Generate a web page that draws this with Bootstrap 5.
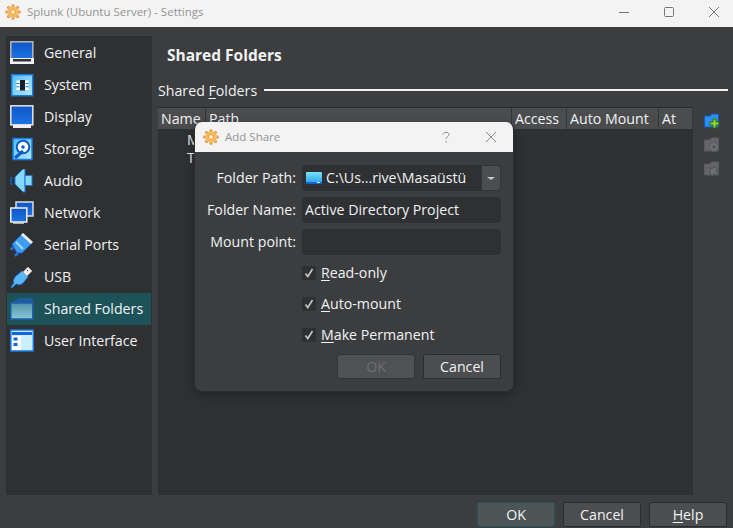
<!DOCTYPE html>
<html lang="en">
<head>
<meta charset="utf-8">
<title>Settings</title>
<link href="https://cdn.jsdelivr.net/npm/bootstrap@5.3.0/dist/css/bootstrap.min.css" rel="stylesheet">
<style>
html,body{height:528px;overflow:hidden}
body{background:#3c3d3f;color:#f0f2f4;font-family:"Open Sans","Noto Sans","Liberation Sans",sans-serif;font-size:14.2px;line-height:20px;position:relative}
.winbar{height:27px;background:#f3f3f3;color:#949494;font-size:11.5px;padding:0 0 3px 5px}
.winbar .ttl{margin-left:6px}
.wctls{margin-right:-3px}
.wctl{width:45px;justify-content:center}
.shell{height:501px;padding:9px 6px 0 6px}
.side{width:146px;height:459px;background:#2f3032;padding-top:1px;flex:none}
.sitem{height:32px;padding-left:3px;margin:0 1px;gap:10px;white-space:nowrap}
.sitem.on{background:#1d5259}
.sitem svg{flex:none}
.mainp{margin-left:6px;width:535px;flex:none}
.ptitle{font-weight:700;font-size:15.5px;height:40px;padding:1px 0 4px 9px;line-height:22px}
.grouph{height:31px;gap:7px;padding-bottom:1px}
.grouph .rule{flex:1;height:2px;background:#f2f2f2;margin:0 -35px 2px 0}
.tablebox{height:388px;background:#2f3032;position:relative}
.thead-row{height:22px;background:#4b4c4e;border-top:1px solid #2b2c2d}
.thc{border-right:1px solid #353638;padding-left:3px;height:21px;line-height:21px;white-space:nowrap;overflow:hidden}
.tcells{position:absolute;left:29px;top:24px;line-height:18px}
.sidetools{width:28px;padding-top:77px;padding-left:11px;gap:8px;flex:none}
.footb{height:35px;padding-top:7px;gap:8px;margin-right:-34px}
.vbtn{width:78px;height:25px;background:#4c4d4f;border:1px solid #2c2d2e;border-radius:2px;color:#f0f2f4;font-size:14.2px;line-height:22px;padding:0;text-align:center}
.vbtn.def{background:#4d5456;border-color:#25525a}
.vbtn.off{background:#505153;color:#6d6e70;border-color:#333436}
.dlg{position:absolute;left:194px;top:122px;width:320px;height:270px;background:#3c3d3f;border:1px solid #2c2d2e;border-top:0;border-radius:8px;overflow:hidden;box-shadow:0 2px 10px rgba(0,0,0,.3)}
.dlgbar{height:30px;background:#f3f3f3;color:#949494;font-size:11.5px;padding-left:9px;margin:0 -1px}
.dlgtxt{margin-left:6px}
.dlgq{margin-left:auto;margin-right:33px}
.dlgx{margin-right:17px}
.dlgbody{padding:10px 12px 0 0}
.frow{height:32px}
.frow.lastf{height:31px}
.flab{width:101px;text-align:right;flex:none;white-space:nowrap}
.fval{margin-left:6px;width:200px;height:26px;background:#2f3032;border-radius:3px;padding-left:3px;line-height:26px;white-space:nowrap;position:relative}
.cbx{margin-left:107px;height:31px;gap:5px}
.cbx .bx{width:14px;height:14px;background:#2f3032;display:flex;align-items:center;justify-content:center}
.dbtns{gap:8px;padding-top:4px}
.arrowb{position:absolute;right:0;top:0;width:20px;height:26px;background:#4c4d4f;border:1px solid #333436;border-radius:0 3px 3px 0;display:flex;align-items:center;justify-content:center}
.arrowb i{display:block;width:0;height:0;border-left:4px solid transparent;border-right:4px solid transparent;border-top:3px solid #c8c9ca}
.hdicon{margin-right:4px;margin-left:1px;flex:none}
u{text-underline-offset:2px}
</style>
</head>
<body>
<svg width="0" height="0" class="d-block position-absolute"><defs>
<linearGradient id="scr" x1="0" y1="0" x2="0" y2="1"><stop offset="0" stop-color="#0f56c8"/><stop offset="1" stop-color="#1c74e4"/></linearGradient>
<linearGradient id="lb" x1="0" y1="0" x2="1" y2="1"><stop offset="0" stop-color="#4fbdf8"/><stop offset="1" stop-color="#b5e9fd"/></linearGradient>
<linearGradient id="fld" x1="0" y1="0" x2="0" y2="1"><stop offset="0" stop-color="#4f94ac"/><stop offset="1" stop-color="#8cc7d2"/></linearGradient>
<linearGradient id="cmb" x1="0" y1="0" x2="0" y2="1"><stop offset="0" stop-color="#7be0fa"/><stop offset="1" stop-color="#22a0e8"/></linearGradient>
<g id="gear"><g stroke="#e8862a" stroke-width="3" stroke-linecap="round"><path d="M8 1.700v12.600M1.700 8h12.600M3.500 3.500l9 9M3.500 12.500l9-9"/></g><g stroke="#f8c469" stroke-width="1.500" stroke-linecap="round"><path d="M8 2v12M2 8h12M3.700 3.700l8.600 8.600M3.700 12.300l8.600-8.600"/></g><circle cx="8" cy="8" r="4.800" fill="#f9bd5c"/><circle cx="8" cy="8" r="2.500" fill="#fff0c4" stroke="#e8892a" stroke-width=".8"/></g>
</defs></svg>
<div class="winbar d-flex align-items-center">
<svg width="16" height="16"><use href="#gear"/></svg><span class="ttl">Splunk (Ubuntu Server) - Settings</span>
<div class="ms-auto d-flex align-items-center wctls">
<span class="wctl d-flex"><svg width="12" height="12"><path d="M1 6.500h10" stroke="#777"/></svg></span>
<span class="wctl d-flex"><svg width="12" height="12"><rect x="1.500" y="1.500" width="9" height="9" rx="1" fill="none" stroke="#777"/></svg></span>
<span class="wctl d-flex"><svg width="12" height="12"><path d="M1 1l10 10M11 1L1 11" stroke="#777"/></svg></span>
</div>
</div>
<div class="shell d-flex">
<div class="side">
<div class="sitem d-flex align-items-center"><svg width="24" height="24"><rect x=".8" y=".8" width="22" height="17" fill="url(#scr)" stroke="#b0b0b0" stroke-width="1.600"/><path d="M0 17h24v6H0z" fill="#f0f0f0"/><path d="M3 18h18v2.500H3z" fill="#333"/></svg>General</div>
<div class="sitem d-flex align-items-center"><svg width="24" height="24"><rect x="1.700" y="1.700" width="21" height="21" fill="url(#lb)" stroke="#1a78e0" stroke-width="1.500"/><rect x="6.500" y="7.500" width="12" height="9.500" fill="#fff"/><rect x="10" y="7" width="5" height="10.500" fill="#16202c"/><path d="M6.500 10.500h3M6.500 13.800h3M15.500 10.500h3M15.500 13.800h3" stroke="#1a78e0"/></svg>System</div>
<div class="sitem d-flex align-items-center"><svg width="24" height="24"><rect x=".8" y=".8" width="22" height="19" fill="url(#scr)" stroke="#dcdcdc" stroke-width="1.600"/><path d="M3 20h18v3H3z" fill="#f0f0f0"/></svg>Display</div>
<div class="sitem d-flex align-items-center"><svg width="24" height="24"><rect x="3" y="1.500" width="19" height="21" fill="url(#lb)" stroke="#1a78e0" stroke-width="1.500"/><circle cx="13" cy="10" r="6.300" fill="#fff" stroke="#0f5ec8" stroke-width="2"/><circle cx="13" cy="10" r="1.800" fill="#0f5ec8"/><path d="M5 21l8-7" stroke="#0f5ec8" stroke-width="3"/></svg>Storage</div>
<div class="sitem d-flex align-items-center"><svg width="24" height="24"><path d="M5 8l8-8h2v23h-2l-8-8z" fill="#86d8fa" stroke="#1d74dc"/><rect x="15" y="6.500" width="7" height="10" fill="#86d8fa" stroke="#1d74dc"/><path d="M2 8q-2.500 3.500 0 8" stroke="#1d5fb8" fill="none" stroke-width="1.500"/></svg>Audio</div>
<div class="sitem d-flex align-items-center"><svg width="24" height="24"><rect x="6" y="1" width="17" height="14" fill="url(#scr)" stroke="#ddd" stroke-width="1.500"/><rect x=".8" y="7" width="16" height="14" fill="url(#scr)" stroke="#f0f0f0" stroke-width="1.500"/><path d="M3 22h11" stroke="#ddd" stroke-width="1.500"/></svg>Network</div>
<div class="sitem d-flex align-items-center"><svg width="24" height="24"><path d="M2 11L12 1l10 9-10 10H7z" fill="#3f9df0" stroke="#1563d8"/><path d="M12 1l10 9" stroke="#eee" stroke-width="3"/><path d="M6 9l7 7" stroke="#9fdcff" stroke-width="2"/><path d="M3 14l-2 3M8 20l-3 3" stroke="#1d74dc" stroke-width="2.500"/></svg>Serial Ports</div>
<div class="sitem d-flex align-items-center"><svg width="24" height="24"><path d="M6 11l6-5 6 6-5 6c-3 3-6 1-7 1l-4 4-1-1 3-4s-2-3 2-7z" fill="#58b8f6" stroke="#1d74dc"/><path d="M13 7l5-5 4 4-5 5z" fill="#eee" stroke="#aaa"/><path d="M17 5l1 1" stroke="#333"/></svg>USB</div>
<div class="sitem on d-flex align-items-center"><svg width="24" height="24"><path d="M.8 6h22v16H.8z" fill="url(#fld)" stroke="#1a5fb0" stroke-width="1.500"/><path d="M1 6l8-5h14v5z" fill="#1f5c9f"/></svg>Shared Folders</div>
<div class="sitem d-flex align-items-center"><svg width="24" height="24"><rect x=".8" y="1" width="22.500" height="21" fill="#c9eefc" stroke="#1a78e0" stroke-width="1.500"/><path d="M2 3h20v3H2z" fill="#1563d8"/><path d="M2 7h9v14H2z" fill="#fff"/><path d="M3.500 8.500h4v3h-4zM3.500 14h4v3h-4z" fill="#1563d8"/></svg>User Interface</div>
</div>
<div class="mainp">
<div class="ptitle d-flex align-items-center">Shared Folders</div>
<div class="grouph d-flex align-items-center"><span>Shared <u>F</u>olders</span><span class="rule"></span></div>
<div class="tablebox">
<div class="thead-row d-flex">
<div class="thc" style="width:48px">Name</div><div class="thc" style="width:306px">Path</div><div class="thc" style="width:55px">Access</div><div class="thc" style="width:92px">Auto Mount</div><div class="thc flex-fill">At</div>
</div>
<div class="tcells">M<br>T</div>
</div>
<div class="footb d-flex justify-content-end">
<button class="vbtn def">OK</button><button class="vbtn">Cancel</button><button class="vbtn"><u>H</u>elp</button>
</div>
</div>
<div class="sidetools d-flex flex-column">
<svg width="16" height="16"><path d="M.500 3h6l1-2h7v13H.500z" fill="#2a8ff0" stroke="#1559b8"/><path d="M9 6h3v3h3v3h-3v3H9v-3H6V9h3z" fill="#8fd62e" stroke="#2f6e10"/></svg>
<svg width="16" height="16"><path d="M.500 3h6l1-2h7v13H.500z" fill="#646567" stroke="#5a5b5d"/><circle cx="10" cy="10" r="4.500" fill="#6e6f71" stroke="#5a5b5d"/><circle cx="10" cy="10" r="1.500" fill="#4c4d4f"/></svg>
<svg width="16" height="16"><path d="M.500 3h6l1-2h7v13H.500z" fill="#646567" stroke="#5a5b5d"/><path d="M6 6l2 2 2-2 3 1-1 3 2 2-2 2-2-1-2 2-2-3z" fill="#6e6f71" stroke="#505153"/></svg>
</div>
</div>
<div class="dlg">
<div class="dlgbar d-flex align-items-center">
<svg width="16" height="16"><use href="#gear"/></svg><span class="dlgtxt">Add Share</span>
<span class="dlgq d-flex"><svg width="12" height="12"><path d="M3 3.500c0-3 6-3 6 0 0 2-3 2-3 4.500M6 10v1.500" fill="none" stroke="#8a8a8a"/></svg></span>
<span class="dlgx d-flex"><svg width="12" height="12"><path d="M1 1l10 10M11 1L1 11" stroke="#888"/></svg></span>
</div>
<div class="dlgbody">
<div class="frow d-flex align-items-center"><span class="flab">Folder Path:</span><div class="fval d-flex align-items-center"><svg width="16" height="12" class="hdicon"><rect width="16" height="12" rx="1" fill="url(#cmb)"/><path d="M0 10h16v2H0z" fill="#1563d8"/><path d="M11 10.500h3" stroke="#fff"/></svg><span>C:\Us...rive\Masaüstü</span><span class="arrowb"><i></i></span></div></div>
<div class="frow d-flex align-items-center"><span class="flab">Folder Name:</span><div class="fval">Active Directory Project</div></div>
<div class="frow lastf d-flex align-items-center"><span class="flab">Mount point:</span><div class="fval"></div></div>
<div class="cbx d-flex align-items-center"><span class="bx"><svg width="10" height="10"><path d="M1.500 5.500l2.300 3L8.500 1" fill="none" stroke="#c8c8c8" stroke-width="1.600"/></svg></span><span><u>R</u>ead-only</span></div>
<div class="cbx d-flex align-items-center"><span class="bx"><svg width="10" height="10"><path d="M1.500 5.500l2.300 3L8.500 1" fill="none" stroke="#c8c8c8" stroke-width="1.600"/></svg></span><span><u>A</u>uto-mount</span></div>
<div class="cbx d-flex align-items-center"><span class="bx"><svg width="10" height="10"><path d="M1.500 5.500l2.300 3L8.500 1" fill="none" stroke="#c8c8c8" stroke-width="1.600"/></svg></span><span><u>M</u>ake Permanent</span></div>
<div class="dbtns d-flex justify-content-end"><button class="vbtn off">OK</button><button class="vbtn">Cancel</button></div>
</div>
</div>
<script src="https://cdn.jsdelivr.net/npm/bootstrap@5.3.0/dist/js/bootstrap.bundle.min.js"></script>
</body>
</html>
